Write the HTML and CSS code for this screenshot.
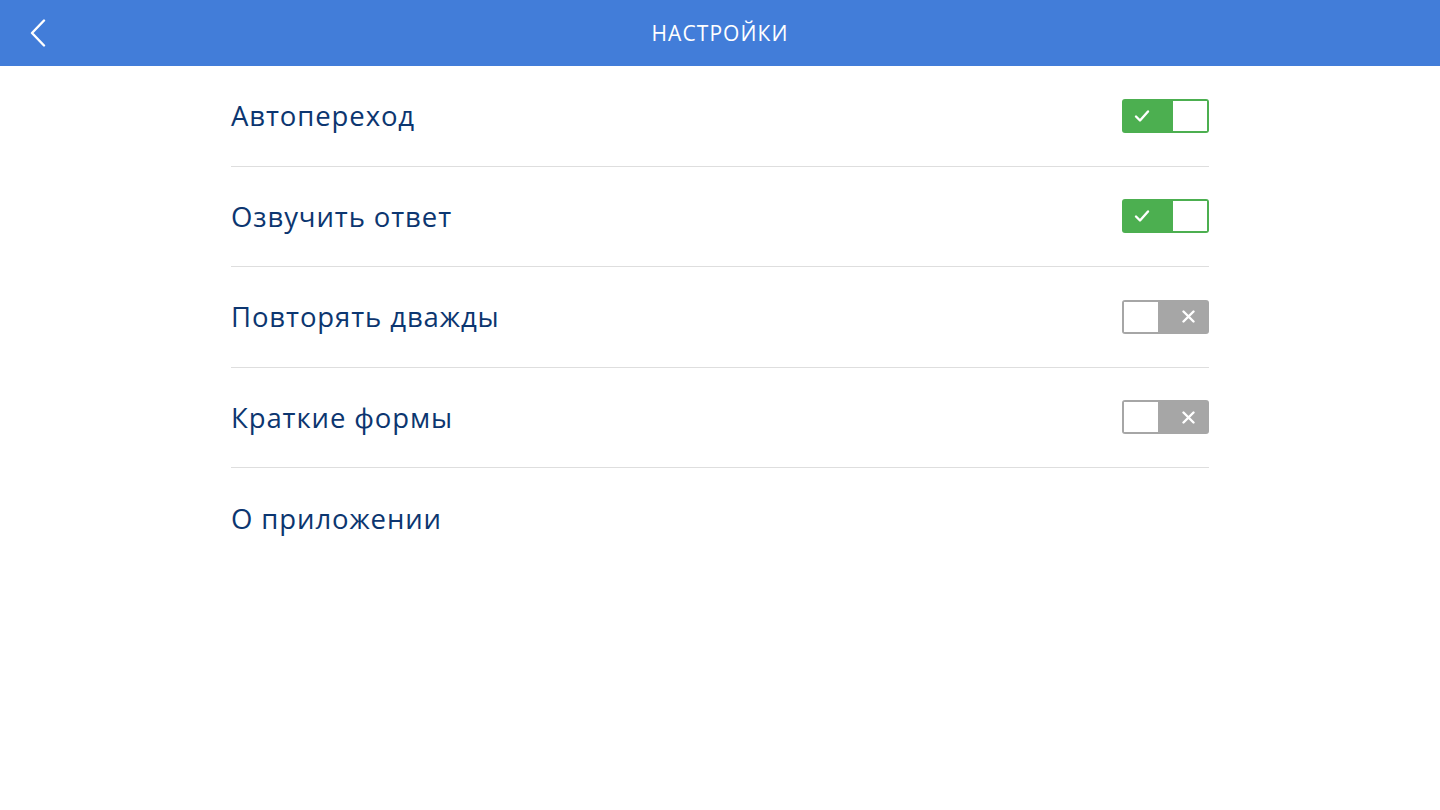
FILE: index.html
```html
<!DOCTYPE html>
<html lang="ru">
<head>
<meta charset="utf-8">
<title>Настройки</title>
<link rel="stylesheet" href="styles.css">
</head>
<body>
<header class="topbar">
  <button class="back" aria-label="Назад">
    <svg width="18" height="28" viewBox="0 0 18 28"><path d="M15 1.5 L3 14 L15 26.5" fill="none" stroke="#fff" stroke-width="2.4" stroke-linecap="round" stroke-linejoin="round"/></svg>
  </button>
  <h1 class="title">НАСТРОЙКИ</h1>
</header>
<main class="list">
  <div class="row">
    <span class="label">Автопереход</span>
    <span class="toggle on"><span class="mark">
      <svg width="16" height="14" viewBox="0 0 16 14"><path d="M2 7.5 L6 11.5 L14 2.5" fill="none" stroke="#fff" stroke-width="2.4" stroke-linecap="round" stroke-linejoin="round"/></svg>
    </span><span class="knob"></span></span>
  </div>
  <div class="row">
    <span class="label">Озвучить ответ</span>
    <span class="toggle on"><span class="mark">
      <svg width="16" height="14" viewBox="0 0 16 14"><path d="M2 7.5 L6 11.5 L14 2.5" fill="none" stroke="#fff" stroke-width="2.4" stroke-linecap="round" stroke-linejoin="round"/></svg>
    </span><span class="knob"></span></span>
  </div>
  <div class="row">
    <span class="label">Повторять дважды</span>
    <span class="toggle off"><span class="knob"></span><span class="mark">
      <svg width="13" height="13" viewBox="0 0 13 13"><path d="M1.5 1.5 L11.5 11.5 M11.5 1.5 L1.5 11.5" fill="none" stroke="#fff" stroke-width="2.4" stroke-linecap="round"/></svg>
    </span></span>
  </div>
  <div class="row">
    <span class="label">Краткие формы</span>
    <span class="toggle off"><span class="knob"></span><span class="mark">
      <svg width="13" height="13" viewBox="0 0 13 13"><path d="M1.5 1.5 L11.5 11.5 M11.5 1.5 L1.5 11.5" fill="none" stroke="#fff" stroke-width="2.4" stroke-linecap="round"/></svg>
    </span></span>
  </div>
  <div class="row last">
    <span class="label">О приложении</span>
  </div>
</main>
</body>
</html>
```
FILE: styles.css
```css
* { box-sizing: border-box; }
html, body { margin: 0; padding: 0; background: #fff; }
body { font-family: "Open Sans", Lato, sans-serif; width: 1440px; height: 810px; overflow: hidden; }

.topbar {
  height: 66px;
  background: #427dd9;
  display: flex;
  align-items: center;
  justify-content: center;
  position: relative;
}
.back {
  position: absolute;
  left: 29px;
  top: 19px;
  background: none;
  border: 0;
  padding: 0;
  width: 18px;
  height: 28px;
  display: flex;
}
.title {
  margin: 0;
  color: #fff;
  font-size: 21px;
  font-weight: 400;
  letter-spacing: 1.1px;
}

.list {
  width: 978px;
  margin: 0 auto;
}
.row {
  height: 100.5px;
  border-bottom: 1px solid #dedede;
  display: flex;
  align-items: center;
  justify-content: space-between;
}
.row.last { border-bottom: 0; }
.label {
  color: #0c3670;
  font-size: 27.5px;
  letter-spacing: 0.9px;
}

.toggle {
  width: 87px;
  height: 34px;
  border-radius: 3px;
  display: flex;
  align-items: stretch;
  padding: 2px;
}
.toggle.on { background: #4caf50; }
.toggle.off { background: #a6a6a6; }
.toggle .mark {
  flex: 1;
  display: flex;
  align-items: center;
}
.toggle.on .mark { justify-content: flex-start; padding-left: 10px; }
.toggle.off .mark { justify-content: flex-end; padding-right: 12px; }
.toggle .knob {
  width: 34px;
  background: #fff;
}
```
